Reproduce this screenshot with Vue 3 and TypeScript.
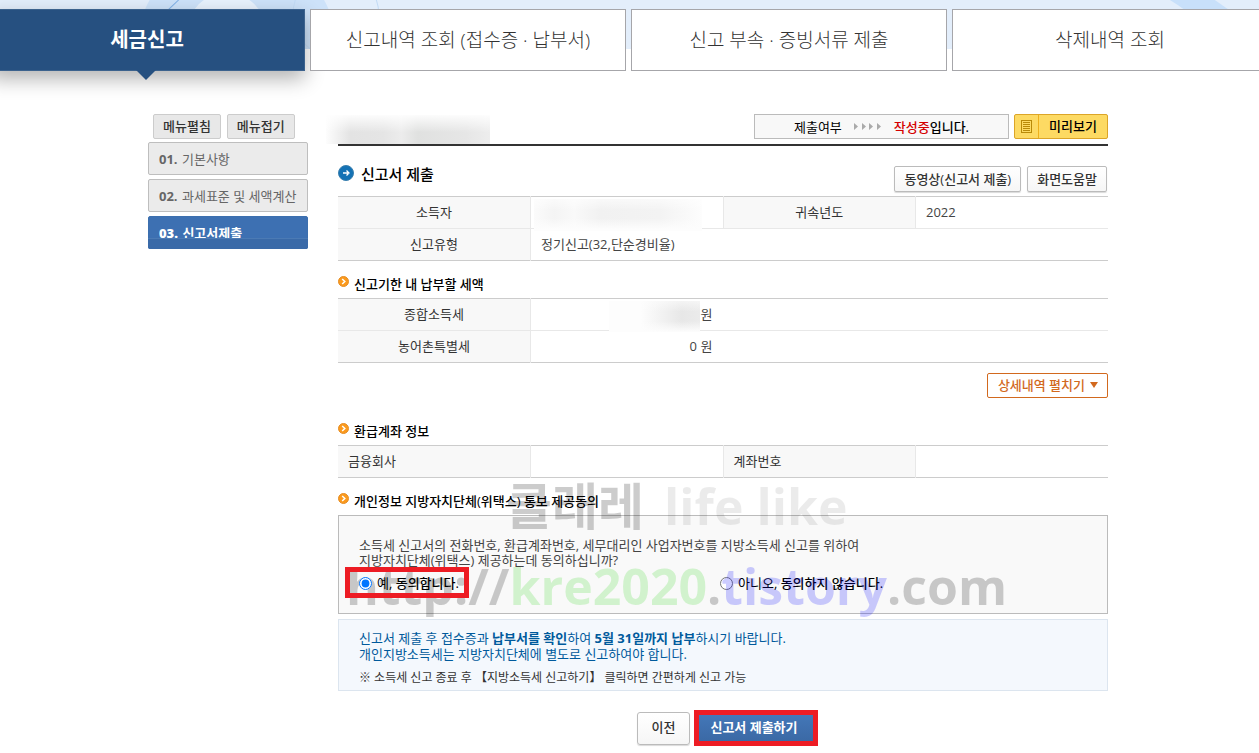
<script setup lang="ts">
import { ref } from 'vue'

const tabs: string[] = ['세금신고', '신고내역 조회 (접수증 · 납부서)', '신고 부속 · 증빙서류 제출', '삭제내역 조회']
const activeTab = ref(0)

const steps = [
  { no: '01.', label: '기본사항' },
  { no: '02.', label: '과세표준 및 세액계산' },
  { no: '03.', label: '신고서제출' },
]
const activeStep = ref(2)
const consent = ref('yes')
</script>

<template>
  <div class="page">
    <header class="top">
      <svg class="decor" viewBox="0 0 1259 48" preserveAspectRatio="xMinYMin slice" aria-hidden="true">
        <circle cx="232" cy="48" r="98" fill="#cde2f9" />
        <circle cx="222" cy="32" r="39" fill="#e8f2fd" />
        <path d="M160 14 L175 0" stroke="#7fb0e6" fill="none" />
        <circle cx="329" cy="14" r="42" stroke="#c3dbf5" fill="none" />
        <path d="M1146 0 H1190 L1203 9 V48 H1190 Q1180 20 1146 0" fill="#c8e0fa" />
      </svg>
      <nav class="tabs">
        <button v-for="(tab, i) in tabs" :key="tab" type="button" class="tab" :class="{ active: i === activeTab }" @click="activeTab = i">
          {{ tab }}
        </button>
      </nav>
    </header>

    <div class="body">
      <aside class="side">
        <div class="side-tools">
          <button type="button" class="tool">메뉴펼침</button>
          <button type="button" class="tool">메뉴접기</button>
        </div>
        <button v-for="(s, i) in steps" :key="s.no" type="button" class="step" :class="{ active: i === activeStep }" @click="activeStep = i">
          <b>{{ s.no }}</b> <span>{{ s.label }}</span>
        </button>
      </aside>

      <main class="main">
        <div class="headline">
          <span class="hidden-title"></span>
          <div class="status">
            <span>제출여부</span>
            <svg width="28" height="9" viewBox="0 0 28 9" fill="#aaa" aria-hidden="true">
              <path d="M0 1l4 3.500-4 3.500zM8 1l4 3.500-4 3.500zM15 1l4 3.500-4 3.500zM23 1l4 3.500-4 3.500z" />
            </svg>
            <strong><em>작성중</em>입니다.</strong>
          </div>
          <button type="button" class="preview">
            <span class="preview-icon">
              <svg width="11" height="13" viewBox="0 0 11 13" fill="none" stroke="#b98a08" aria-hidden="true">
                <rect x=".5" y=".5" width="10" height="12" />
                <path d="M2 2.500h7M2 4.500h7M2 6.500h7M2 8.500h7M2 10.500h7" />
              </svg>
            </span>
            <span class="preview-label">미리보기</span>
          </button>
        </div>

        <div class="title-row">
          <svg width="16" height="16" viewBox="0 0 16 16" aria-hidden="true">
            <circle cx="8" cy="8" r="7.500" fill="#1472b5" stroke="#3a7fae" />
            <path d="M5 8h5M8.500 5.500L11 8l-2.500 2.500" fill="none" stroke="#fff" stroke-width="1.300" />
          </svg>
          <h1>신고서 제출</h1>
          <button type="button" class="plain">동영상(신고서 제출)</button>
          <button type="button" class="plain">화면도움말</button>
        </div>

        <table class="grid centered">
          <colgroup><col /><col /><col /><col /></colgroup>
          <tbody>
            <tr>
              <th scope="row">소득자</th>
              <td class="masked-cell"><span class="mask name"></span></td>
              <th scope="row">귀속년도</th>
              <td>2022</td>
            </tr>
            <tr>
              <th scope="row">신고유형</th>
              <td colspan="3">정기신고(32,단순경비율)</td>
            </tr>
          </tbody>
        </table>

        <h2>
          <svg class="bullet" viewBox="0 0 11 11" aria-hidden="true"><circle cx="5.500" cy="5.500" r="5" fill="#fb9a1d" stroke="#e58d25" /><path d="M4.200 3l2.600 2.500-2.600 2.500" fill="none" stroke="#fff" stroke-width="1.500" /></svg>
          신고기한 내 납부할 세액
        </h2>
        <table class="grid centered">
          <colgroup><col /><col /><col /><col /></colgroup>
          <tbody>
            <tr>
              <th scope="row">종합소득세</th>
              <td colspan="3" class="masked-cell"><span class="mask money"></span><span class="amount"></span> 원</td>
            </tr>
            <tr>
              <th scope="row">농어촌특별세</th>
              <td colspan="3"><span class="amount">0</span> 원</td>
            </tr>
          </tbody>
        </table>
        <div class="expand-row">
          <button type="button" class="expand">
            상세내역 펼치기
            <svg width="8" height="6" viewBox="0 0 8 6" fill="#d2691e" aria-hidden="true"><path d="M0 0h8L4 6z" /></svg>
          </button>
        </div>

        <h2>
          <svg class="bullet" viewBox="0 0 11 11" aria-hidden="true"><circle cx="5.500" cy="5.500" r="5" fill="#fb9a1d" stroke="#e58d25" /><path d="M4.200 3l2.600 2.500-2.600 2.500" fill="none" stroke="#fff" stroke-width="1.500" /></svg>
          환급계좌 정보
        </h2>
        <table class="grid">
          <colgroup><col /><col /><col /><col /></colgroup>
          <tbody>
            <tr>
              <th scope="row">금융회사</th>
              <td></td>
              <th scope="row">계좌번호</th>
              <td></td>
            </tr>
          </tbody>
        </table>

        <section class="consent-area">
          <h2>
            <svg class="bullet" viewBox="0 0 11 11" aria-hidden="true"><circle cx="5.500" cy="5.500" r="5" fill="#fb9a1d" stroke="#e58d25" /><path d="M4.200 3l2.600 2.500-2.600 2.500" fill="none" stroke="#fff" stroke-width="1.500" /></svg>
            개인정보 지방자치단체(위택스) 통보 제공동의
          </h2>
          <div class="consent">
            <p>소득세 신고서의 전화번호, 환급계좌번호, 세무대리인 사업자번호를 지방소득세 신고를 위하여<br />지방자치단체(위택스) 제공하는데 동의하십니까?</p>
            <div class="choices">
              <label class="marked"><input v-model="consent" type="radio" name="consent" value="yes" /><span>예, <b>동의합니다.</b></span></label>
              <label><input v-model="consent" type="radio" name="consent" value="no" /><span>아니오, <b>동의하지 않습니다.</b></span></label>
            </div>
          </div>
          <div class="watermark owner"><span>클래레</span><span class="faint">life like</span></div>
          <div class="watermark link"><span class="scheme">http://</span><span class="green">kre2020</span><span>.</span><span class="violet">tistory</span><span>.com</span></div>
        </section>

        <div class="notice">
          <p>신고서 제출 후 접수증과 <b>납부서를 확인</b>하여 <b>5월 31일까지 납부</b>하시기 바랍니다.<br />개인지방소득세는 지방자치단체에 별도로 신고하여야 합니다.</p>
          <p class="small">※ 소득세 신고 종료 후 【지방소득세 신고하기】 클릭하면 간편하게 신고 가능</p>
        </div>

        <div class="actions">
          <button type="button" class="prev">이전</button>
          <button type="button" class="submit">신고서 제출하기</button>
        </div>
      </main>
    </div>
  </div>
</template>

<style>
body {
  margin: 0;
  background: #fff;
}
</style>

<style scoped>
.page {
  overflow: hidden;
  font-family: "Open Sans", "Noto Sans CJK KR", sans-serif;
  font-size: 13px;
  line-height: 16px;
  color: #333;
}
button {
  box-sizing: border-box;
  margin: 0;
  font: inherit;
  color: inherit;
  white-space: nowrap;
  cursor: pointer;
}
h1, h2, p {
  margin: 0;
}
.top {
  position: relative;
  padding-top: 9px;
  background: linear-gradient(#e3eefb, #e3eefb) top / 100% 49px no-repeat;
}
.decor {
  position: absolute;
  top: 0;
  left: 0;
  width: 100%;
  height: 49px;
}
.tabs {
  position: relative;
  display: grid;
  grid-template-columns: repeat(4, 1fr);
  gap: 5px;
  margin: 0 -9px 0 -11px;
}
.tab {
  position: relative;
  height: 62px;
  padding: 0;
  border: 1px solid #a6a6aa;
  background: #fff;
  font-size: 19px;
  font-weight: 300;
}
.tab.active {
  border-color: #3c628d;
  background: #265080;
  color: #fff;
  font-size: 20px;
  font-weight: 700;
  box-shadow: 0 8px 20px rgba(0, 0, 0, 0.3);
}
.tab.active::after {
  content: "";
  position: absolute;
  top: 60px;
  left: 50%;
  margin-left: -11px;
  border: 10px solid transparent;
  border-top-color: #265080;
  border-bottom: 0;
}
.body {
  display: flex;
  gap: 30px;
  max-width: 960px;
  margin: 0 auto;
  padding: 43px 3px 6px 0;
}
.side {
  display: flex;
  flex: 0 0 160px;
  flex-direction: column;
  gap: 4px;
}
.side-tools {
  display: flex;
  gap: 6px;
  height: 24px;
  padding-left: 5px;
}
.tool {
  height: 25px;
  padding: 0 9px 1px;
  border: 1px solid #ccc;
  border-radius: 2px;
  background: #e8e8e8;
  font-weight: 500;
}
.step {
  position: relative;
  height: 33px;
  padding: 0 10px;
  border: 1px solid #bebebe;
  border-radius: 2px;
  background: #ebebeb;
  color: #666;
  text-align: left;
}
.step span {
  margin-left: 1px;
}
.step.active {
  border-color: #3c6fae;
  background: #3d70b2;
  color: #fff;
  font-weight: 700;
}
.step.active::after {
  content: "";
  position: absolute;
  right: -1px;
  bottom: -1px;
  left: -1px;
  height: 10px;
  border-top: 1px solid #4b7ab4;
  border-radius: 0 0 2px 2px;
  background: #3a6aa8;
}
.main {
  flex: 1;
  min-width: 0;
}
.headline {
  display: flex;
  gap: 5px;
  height: 30px;
  border-bottom: 2px solid #333;
}
.hidden-title {
  width: 164px;
  height: 29px;
  margin: 1px auto 0 -12px;
  background:
    linear-gradient(rgba(255, 255, 255, 0.9), rgba(255, 255, 255, 0) 60%),
    linear-gradient(90deg, #fdfdfd, #e3e3e3 15%, #e5e5e5 35%, #ececec 46%, #e0e1e0 56%, #e6e6e6 85%, #ededed);
}
.status {
  box-sizing: border-box;
  display: flex;
  align-items: center;
  justify-content: center;
  gap: 12px;
  width: 255px;
  height: 25px;
  border: 1px solid #bbb;
  background: #f8f8f8;
  color: #000;
}
.status strong {
  font-weight: 500;
}
.status em {
  color: #d40000;
  font-style: normal;
}
.preview {
  display: flex;
  width: 94px;
  height: 25px;
  padding: 0;
  border: 1px solid #dca528;
  border-radius: 2px;
  background: #fdda63;
  color: #000;
  font-weight: 500;
}
.preview-icon {
  display: flex;
  align-items: center;
  justify-content: center;
  width: 23px;
  height: 23px;
  border-right: 1px solid #eeb01c;
}
.preview-label {
  flex: 1;
  line-height: 23px;
}
.title-row {
  display: flex;
  align-items: center;
  gap: 6px;
  height: 25px;
  padding: 20px 1px 5px 0;
}
.title-row svg {
  margin-top: -12px;
}
h1 {
  margin: -10px auto 0 1px;
  font-size: 15px;
  line-height: 20px;
  font-weight: 500;
  color: #000;
}
.plain {
  height: 26px;
  padding: 0 9px;
  border: 1px solid #bbb;
  border-radius: 2px;
  background: linear-gradient(#fff, #f6f6f6);
  box-shadow: 0 1px 1px rgba(0, 0, 0, 0.15);
  font-weight: 500;
}
.grid {
  width: 100%;
  table-layout: fixed;
  border-collapse: collapse;
  border-top: 1px solid #ccc;
  border-bottom: 1px solid #ccc;
}
.grid tr + tr {
  border-top: 1px solid #e8e8e8;
}
.grid th,
.grid td {
  box-sizing: border-box;
  height: 32px;
  padding: 0 10px 2px;
  text-align: left;
}
.grid th {
  border-right: 1px solid #e8e8e8;
  background: #f8f8f8;
  font-weight: 400;
}
.grid td {
  color: #444;
}
.grid td + th {
  border-left: 1px solid #e8e8e8;
}
.centered th {
  text-align: center;
}
.masked-cell {
  position: relative;
}
.mask {
  position: absolute;
  top: 2px;
}
.mask.name {
  left: 3px;
  width: 168px;
  height: 32px;
  background:
    linear-gradient(rgba(255, 255, 255, 0.6), transparent 35%, transparent 60%, #fdfdfd 95%),
    linear-gradient(90deg, #fbfbfb, #f4f4f4 12%, #f9f9f9 24%, #f1f1f1 40%, #f3f3f3 75%, #fdfdfd);
}
.mask.money {
  left: 78px;
  width: 91px;
  height: 31px;
  background:
    linear-gradient(rgba(253, 253, 253, 0.6), transparent 35%, transparent 65%, #fdfdfd),
    linear-gradient(90deg, #fdfdfd 35%, #f0f0f0 62%, #e7e7e7 80%, #ebebeb);
}
.amount {
  display: inline-block;
  width: 156px;
  text-align: right;
}
h2 {
  display: flex;
  gap: 5px;
  padding: 15px 0 6px;
  font-size: 13px;
  line-height: 16px;
  font-weight: 500;
  color: #000;
}
.bullet {
  width: 11px;
  height: 11px;
}
.expand-row {
  display: flex;
  justify-content: flex-end;
  padding: 10px 0;
}
.expand {
  display: flex;
  align-items: center;
  gap: 5px;
  height: 25px;
  padding: 0 9px 1px 10px;
  border: 1px solid #d2691e;
  border-radius: 2px;
  background: #fff;
  color: #d2691e;
  font-weight: 500;
}
.consent-area {
  position: relative;
}
.consent {
  padding: 22px 20px 15px;
  border: 1px solid #bbb;
  background: #f9f9f9;
  line-height: 15px;
  color: #444;
}
.choices {
  display: flex;
  margin: -1px 0 0 -14px;
  color: #000;
}
.choices b {
  font-weight: 500;
}
.choices label {
  box-sizing: border-box;
  display: flex;
  align-items: center;
  gap: 5px;
  height: 31px;
  padding: 2px 14px 0;
  white-space: nowrap;
}
.choices .marked {
  position: relative;
  z-index: 1;
  width: 124px;
  margin-right: 237px;
  padding: 2px 0 0 9px;
  border: 5px solid #ed1c24;
}
.choices input {
  width: 13px;
  height: 13px;
  margin: 0;
}
.watermark {
  position: absolute;
  display: flex;
  font-size: 50px;
  line-height: 56px;
  font-weight: 700;
  white-space: nowrap;
  color: rgba(0, 0, 0, 0.2);
  pointer-events: none;
}
.owner {
  top: 0;
  left: 168px;
  gap: 20px;
}
.faint {
  color: rgba(0, 0, 0, 0.08);
}
.link {
  top: 80px;
  left: 8px;
}
.green {
  color: rgba(70, 220, 50, 0.22);
}
.violet {
  color: rgba(0, 0, 255, 0.2);
}
.notice {
  margin-top: 5px;
  padding: 10px 20px 4px;
  border: 1px solid #dce5ef;
  background: #f4f8fd;
  color: #005a9c;
}
.notice .small {
  margin-top: 8px;
  font-size: 12px;
  color: #333;
}
.actions {
  display: flex;
  align-items: center;
  justify-content: center;
  gap: 4px;
  padding-top: 19px;
  padding-left: 9px;
}
.prev {
  width: 53px;
  height: 33px;
  padding: 0 0 2px;
  border: 1px solid #bbb;
  border-radius: 3px;
  background: linear-gradient(#fff, #f6f6f6);
  box-shadow: 0 1px 1px rgba(0, 0, 0, 0.15);
  font-weight: 500;
}
.submit {
  width: 124px;
  height: 36px;
  padding: 0 4px 2px 0;
  border: 5px solid #ed1c24;
  background: linear-gradient(#4377b8, #3b69a5);
  color: #fff;
  font-weight: 700;
}
</style>
